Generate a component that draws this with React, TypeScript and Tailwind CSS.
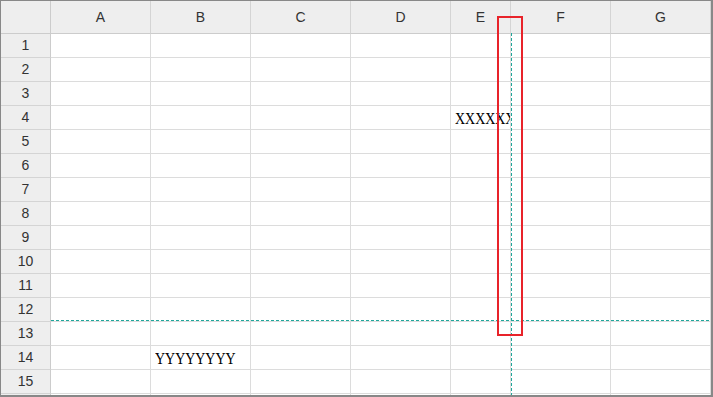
import React from "react";

const COLUMNS = [
  { label: "A", width: "w-[100px]" },
  { label: "B", width: "w-[100px]" },
  { label: "C", width: "w-[100px]" },
  { label: "D", width: "w-[100px]" },
  { label: "E", width: "w-[60px]" },
  { label: "F", width: "w-[100px]" },
  { label: "G", width: "w-[100px]" },
];

const ROWS = Array.from({ length: 16 }, (_, i) => i + 1);

// cell values keyed by "col:row"
const VALUES: Record<string, string> = {
  "E:4": "XXXXXXXX",
  "B:14": "YYYYYYYY",
};

function Cell({ value }: { value?: string }) {
  return (
    <div className="h-6 border-r border-b border-[#dcdcdc] overflow-hidden flex items-end pl-[4px]">
      {value && (
        <span className="inline-block whitespace-nowrap origin-left scale-x-[0.82] text-[17px] leading-[20px] text-black font-['Liberation_Serif',serif]">
          {value}
        </span>
      )}
    </div>
  );
}

export default function App() {
  return (
    <div className="relative w-[713px] h-[397px] overflow-hidden bg-white border-[#888] border-l border-t border-r-2 border-b-2 font-['Liberation_Sans',Arial,sans-serif]">
      <div className="flex">
        {/* row numbers */}
        <div className="w-[50px] shrink-0">
          <div className="h-[33px] bg-[#eee] border-r border-b border-[#ccc]" />
          {ROWS.map((r) => (
            <div
              key={r}
              className="h-6 bg-[#eee] border-r border-b border-[#d4d4d4] border-r-[#ccc] flex items-center justify-center text-[14px] text-[#333]"
            >
              {r}
            </div>
          ))}
        </div>

        {COLUMNS.map((col) => (
          <div key={col.label} className={`${col.width} shrink-0`}>
            <div className="h-[33px] bg-[#eee] border-r border-b border-[#d4d4d4] border-b-[#ccc] flex items-center justify-center text-[14px] text-[#333]">
              {col.label}
            </div>
            {ROWS.map((r) => (
              <Cell key={r} value={VALUES[`${col.label}:${r}`]} />
            ))}
          </div>
        ))}
      </div>

      {/* split guides */}
      <svg
        className="absolute inset-0 pointer-events-none"
        width="710"
        height="394"
      >
        <line
          x1="510.5"
          y1="32"
          x2="510.5"
          y2="394"
          stroke="#1fa69b"
          strokeWidth="1"
          strokeDasharray="3 2"
        />
        <line
          x1="50"
          y1="319.5"
          x2="710"
          y2="319.5"
          stroke="#1fa69b"
          strokeWidth="1"
          strokeDasharray="3 2"
        />
      </svg>

      {/* highlight frame */}
      <div className="absolute left-[496px] top-[15px] w-[26px] h-[320px] border-2 border-[#e8232a]" />
    </div>
  );
}
